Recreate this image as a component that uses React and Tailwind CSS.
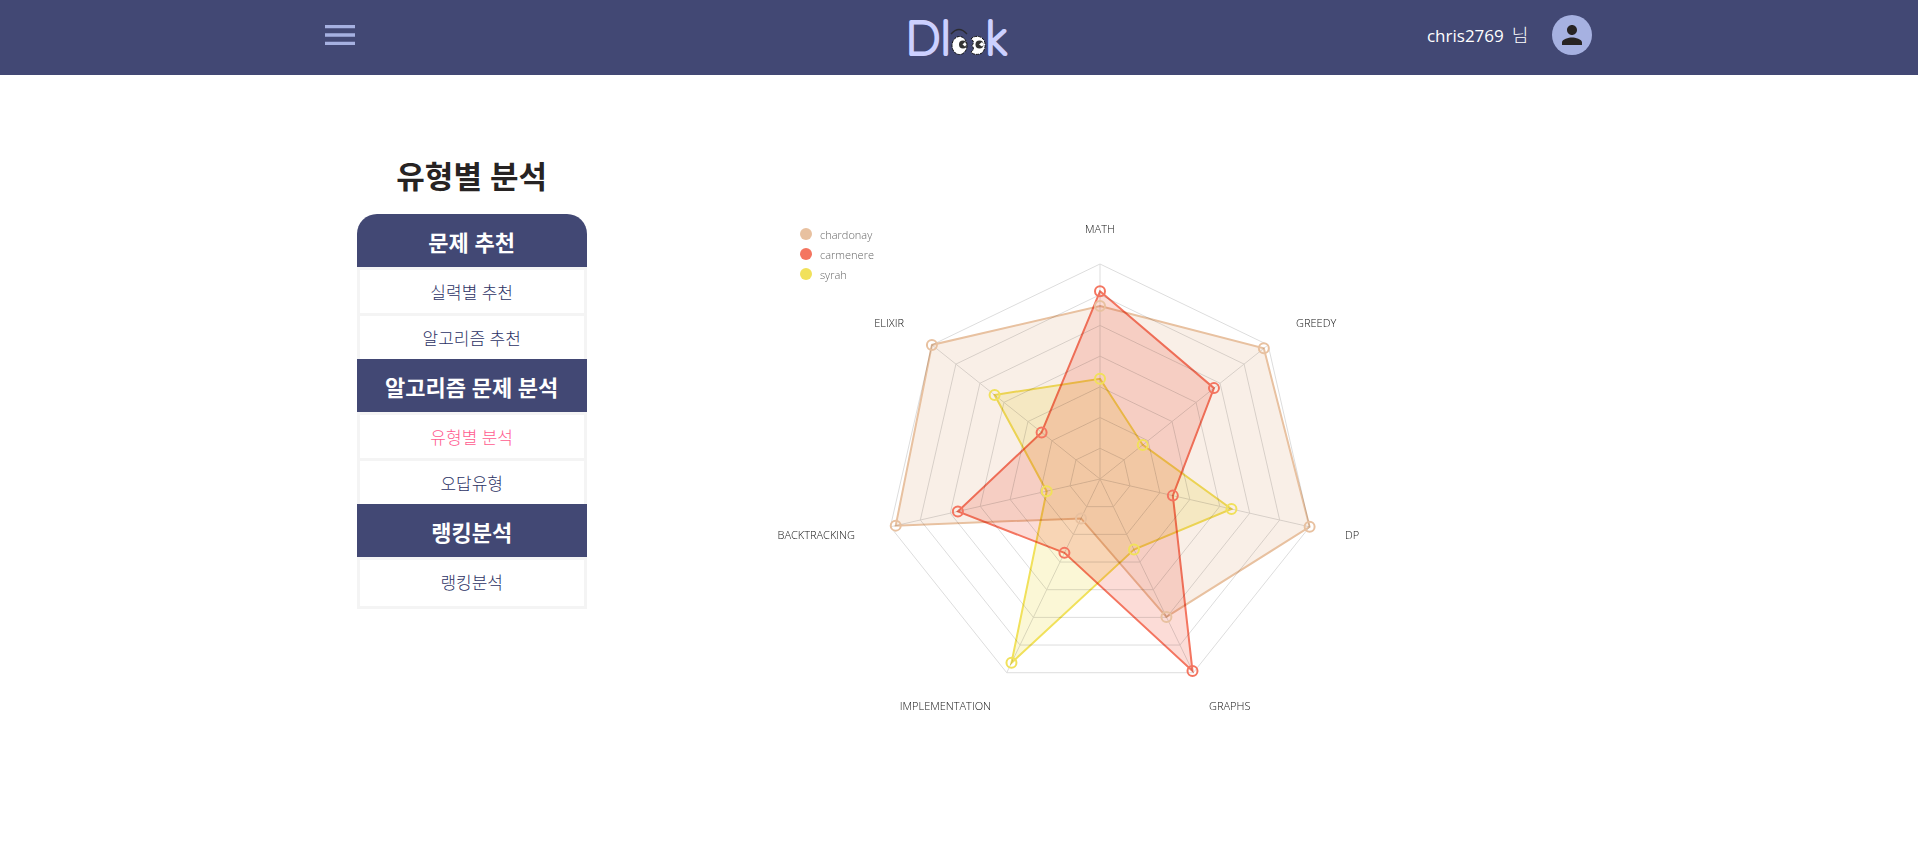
const SECTIONS = [
  { title: '문제 추천', items: ['실력별 추천', '알고리즘 추천'] },
  { title: '알고리즘 문제 분석', items: ['유형별 분석', '오답유형'] },
  { title: '랭킹분석', items: ['랭킹분석'] },
];
const ACTIVE = '유형별 분석';

const RADIUS = 215;
const LEVELS = 7;
const MAX = 118;
const AXES = [
  { name: 'MATH', x: 0, y: -246, anchor: 'middle' },
  { name: 'GREEDY', x: 196, y: -152, anchor: 'start' },
  { name: 'DP', x: 245, y: 60, anchor: 'start' },
  { name: 'GRAPHS', x: 109, y: 231, anchor: 'start' },
  { name: 'IMPLEMENTATION', x: -109, y: 231, anchor: 'end' },
  { name: 'BACKTRACKING', x: -245, y: 60, anchor: 'end' },
  { name: 'ELIXIR', x: -196, y: -152, anchor: 'end' },
];
const SERIES = [
  { name: 'chardonay', color: '#e8c1a0', values: [95, 115, 118, 84, 24, 115, 118] },
  { name: 'carmenere', color: '#f47560', values: [103, 80, 41, 117, 45, 80, 41] },
  { name: 'syrah', color: '#f1e15b', values: [55, 30, 74, 43, 112, 30, 74] },
];

function point(index, r) {
  const a = (Math.PI * 2 * index) / AXES.length;
  return [r * Math.sin(a), -r * Math.cos(a)];
}

function ring(radii) {
  return radii.map((r, i) => point(i, r).map((n) => n.toFixed(2)).join(',')).join(' ');
}

function RadarChart() {
  return (
    <svg
      viewBox="-340 -270 680 540"
      className="isolate h-auto w-full max-w-[680px] font-['Open_Sans','Noto_Sans',sans-serif] text-[11px] font-light"
      role="img"
      aria-label="유형별 분석"
    >
      <g fill="none" stroke="#dddddd">
        {AXES.map((axis, i) => {
          const [x, y] = point(i, RADIUS);
          return <line key={axis.name} x1="0" y1="0" x2={x} y2={y} />;
        })}
        {Array.from({ length: LEVELS }, (_, i) => (
          <polygon key={i} points={ring(AXES.map(() => (RADIUS * (i + 1)) / LEVELS))} />
        ))}
      </g>
      {SERIES.map((s) => (
        <polygon
          key={s.name}
          className="mix-blend-multiply"
          points={ring(s.values.map((v) => (v / MAX) * RADIUS))}
          fill={s.color}
          fillOpacity="0.25"
          stroke={s.color}
          strokeWidth="2"
        />
      ))}
      {SERIES.map((s) =>
        s.values.map((v, i) => {
          const [x, y] = point(i, (v / MAX) * RADIUS);
          return (
            <circle key={s.name + i} cx={x} cy={y} r="5" fill="none" stroke={s.color} strokeWidth="2" />
          );
        })
      )}
      {AXES.map((axis) => (
        <text key={axis.name} x={axis.x} y={axis.y} textAnchor={axis.anchor} fill="#111111">
          {axis.name}
        </text>
      ))}
      {SERIES.map((s, i) => (
        <g key={s.name}>
          <circle cx="-294" cy={-245 + i * 20} r="6" fill={s.color} />
          <text x="-280" y={-240 + i * 20} fill="#666666">
            {s.name}
          </text>
        </g>
      ))}
    </svg>
  );
}

function Logo() {
  return (
    <svg width="110" height="64" viewBox="0 -7 110 64" role="img" aria-label="Dlook">
      <g
        className="font-['Lato',sans-serif] text-[45px] leading-none font-thin"
        fill="#ccd0ff"
        stroke="#ccd0ff"
        strokeWidth="4"
        strokeLinejoin="round"
      >
        <text x="2" y="44">D</text>
        <text x="37" y="44">l</text>
        <text x="82" y="44">k</text>
      </g>
      <path d="M47 24 Q55 15 63 24" fill="none" stroke="#2b2b30" strokeWidth="1.3" />
      <ellipse cx="55.5" cy="35.5" rx="7.5" ry="9" fill="#ffffff" stroke="#111111" strokeDasharray="3 1" />
      <circle cx="59" cy="34.5" r="4" fill="#333333" />
      <path d="M58.5 34.5 L61 32 L62.5 34.5 L61 36.5 Z" fill="#ffffff" />
      <path
        d="M67 29 C69 26 76 25 79 29 C82 32 82 39 78 43 C75 45 69 45 67 42 C70 40 70 38 68 35.5 C70 33 70 31 67 29 Z"
        fill="#ffffff"
        stroke="#111111"
        strokeDasharray="3 1"
      />
      <circle cx="75.5" cy="34.5" r="4" fill="#333333" />
      <path d="M75 34.5 L78 32 L80 34.5 L78 36.5 Z" fill="#ffffff" />
    </svg>
  );
}

export default function App() {
  return (
    <div className="min-h-screen bg-white font-['Open_Sans','Noto_Sans_CJK_KR',sans-serif] text-[#272323]">
      <header className="bg-[#424874]">
        <div className="mx-auto grid h-[75px] w-2/3 grid-cols-3 items-center pb-[5px]">
          <button type="button" aria-label="메뉴" className="size-10 justify-self-start text-[#a6b1e1]">
            <svg viewBox="0 0 24 24" fill="currentColor" className="size-10">
              <path d="M3 18h18v-2H3v2zm0-5h18v-2H3v2zm0-7v2h18V6H3z" />
            </svg>
          </button>
          <a href="#" className="justify-self-center">
            <Logo />
          </a>
          <div className="flex items-center gap-6 justify-self-end pr-[6px]">
            <span className="flex items-baseline gap-2 text-white">
              <span className="text-[17px]">chris2769</span>
              <span className="text-[18px] font-light">님</span>
            </span>
            <button
              type="button"
              aria-label="내 정보"
              className="flex size-10 items-center justify-center rounded-full bg-[#a6b1e1] text-[#272323]"
            >
              <svg viewBox="0 0 24 24" fill="currentColor" className="size-[30px]">
                <path d="M12 12c2.21 0 4-1.79 4-4s-1.79-4-4-4-4 1.79-4 4 1.79 4 4 4zm0 2c-2.67 0-8 1.34-8 4v2h16v-2c0-2.66-5.33-4-8-4z" />
              </svg>
            </button>
          </div>
        </div>
      </header>

      <main className="mx-auto flex w-2/3 items-start gap-[173px] pl-[37px] pt-20">
        <aside className="w-[230px] shrink-0">
          <h1 className="mb-[17px] text-center text-[31px] leading-[42px] font-bold">유형별 분석</h1>
          <nav className="overflow-hidden rounded-t-[20px]">
            {SECTIONS.map((section) => (
              <section key={section.title}>
                <h2 className="bg-[#424874] pt-[3px] text-center text-[22px] leading-[50px] font-bold text-white">
                  {section.title}
                </h2>
                <ul className="border-x-[3px] border-[#f4f4f4]">
                  {section.items.map((item) => (
                    <li key={item} className="border-t-[3px] border-[#f4f4f4]">
                      <a
                        href="#"
                        className={
                          item === ACTIVE
                            ? 'block pt-[3px] text-center text-[17px] leading-10 font-light text-[#ff5c8f]'
                            : 'block pt-[3px] text-center text-[17px] leading-10 font-light text-[#2c3264]'
                        }
                      >
                        {item}
                      </a>
                    </li>
                  ))}
                </ul>
              </section>
            ))}
            <div className="h-[6px] border-x-[3px] border-b-[3px] border-[#f4f4f4]" />
          </nav>
        </aside>
        <div className="min-w-0 flex-1 pt-[54px]">
          <RadarChart />
        </div>
      </main>
    </div>
  );
}
